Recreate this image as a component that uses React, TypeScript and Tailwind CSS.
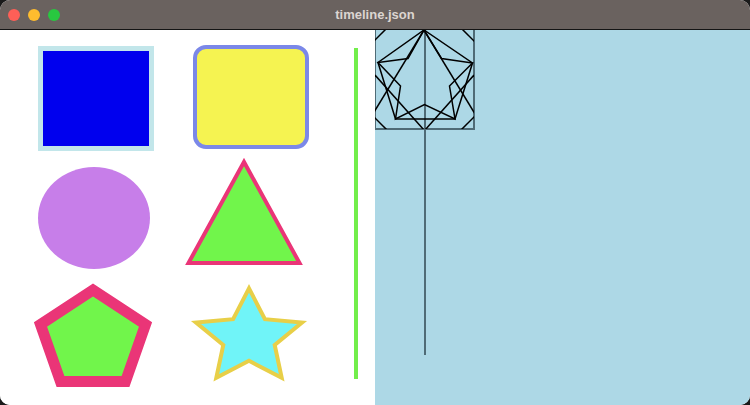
import React from "react";

const starPoints = (cx: number, cy: number, Rx: number, Ry: number, rx: number, ry: number) => {
  const pts: string[] = [];
  for (let i = 0; i < 10; i++) {
    const a = (-90 + i * 36) * (Math.PI / 180);
    const ax = i % 2 === 0 ? Rx : rx;
    const ay = i % 2 === 0 ? Ry : ry;
    pts.push(`${(cx + ax * Math.cos(a)).toFixed(1)},${(cy + ay * Math.sin(a)).toFixed(1)}`);
  }
  return pts.join(" ");
};

const TrafficLights = () => (
  <div className="flex items-center gap-[8px] pl-[8px]">
    <span className="w-[12px] h-[12px] rounded-full bg-[#fe5f57]" />
    <span className="w-[12px] h-[12px] rounded-full bg-[#febc2e]" />
    <span className="w-[12px] h-[12px] rounded-full bg-[#28c840]" />
  </div>
);

const ShapesPanel = () => (
  <div className="w-[375px] h-full bg-white flex">
    <div className="grid grid-cols-[155px_155px] grid-rows-[117px_118px_118px] pl-[17px] pt-[10px]">
      {/* row 1 */}
      <div className="flex items-start">
        <div className="ml-[21px] mt-[6px] w-[116px] h-[105px] border-[5px] border-[#c2e6ea] bg-[#0000ee]" />
      </div>
      <div className="flex items-start">
        <div className="ml-[21px] mt-[5px] w-[116px] h-[104px] border-[4px] border-[#7b88e8] rounded-[13px] bg-[#f5f351]" />
      </div>
      {/* row 2 */}
      <div className="flex items-start">
        <div className="ml-[21px] mt-[10px] w-[112px] h-[102px] rounded-[50%] bg-[#c77ee9]" />
      </div>
      <div>
        <svg width="155" height="118" viewBox="0 0 155 118">
          <polygon
            points="72,5 16.5,106 127.5,106"
            fill="#71f54b"
            stroke="#ea3577"
            strokeWidth="4"
          />
        </svg>
      </div>
      {/* row 3 */}
      <div>
        <svg width="155" height="118" viewBox="0 0 155 118">
          <polygon
            points="76,15 23.5,49.5 43.5,106.5 108.5,106.5 128.5,49.5"
            fill="#71f54b"
            stroke="#ea3577"
            strokeWidth="11"
          />
        </svg>
      </div>
      <div>
        <svg width="155" height="118" viewBox="0 0 155 118">
          <polygon
            points={starPoints(77, 62.8, 55.7, 49.5, 27, 23)}
            fill="#70f4f8"
            stroke="#e8cf48"
            strokeWidth="4"
          />
        </svg>
      </div>
    </div>
    <div className="ml-[27px] mt-[18px] w-[4px] h-[331px] bg-[#72ee4b]" />
  </div>
);

const pentagon = "49,0 3,32.5 20.5,89 80,89 97.5,33";
const star = "49,0 33,28.5 3,32.5 25.5,56 20.5,89 49.5,74.5 80,89 74.5,56 97.5,33 66.5,28.5";

const CanvasPanel = () => (
  <div className="relative flex-1 h-full bg-[#add8e6]">
    <svg className="absolute left-0 top-0" width="110" height="330" viewBox="0 0 110 330">
      <defs>
        <clipPath id="box">
          <rect x="0" y="0" width="99" height="99" />
        </clipPath>
      </defs>
      <rect x="0" y="-1" width="99" height="100" fill="none" stroke="#4f6b76" strokeWidth="2" />
      <line x1="50" y1="0" x2="50" y2="325" stroke="#4f6b76" strokeWidth="2" />
      <g clipPath="url(#box)" fill="none" stroke="#000" strokeWidth="1.5" strokeLinejoin="miter">
        <polygon points={pentagon} />
        <polygon points={star} />
        <line x1="49" y1="0" x2="-10" y2="97" />
        <line x1="49" y1="0" x2="108" y2="97" />
        <line x1="-2" y1="12" x2="12" y2="-2" />
        <line x1="86" y1="-2" x2="100" y2="12" />
        <line x1="-2" y1="86" x2="12" y2="100" />
        <line x1="86" y1="100" x2="100" y2="86" />
        <line x1="99" y1="45" x2="50" y2="100" />
        <line x1="0" y1="45" x2="49" y2="100" />
      </g>
    </svg>
  </div>
);

export default function App() {
  return (
    <div className="w-[750px] h-[405px] bg-[#1a1a1a]">
      <div className="w-full h-full rounded-[10px] overflow-hidden flex flex-col bg-white">
        <div className="relative h-[30px] shrink-0 bg-[#6a625f] border-b border-[#141414] flex items-center">
          <TrafficLights />
          <div
            className="absolute inset-0 flex items-center justify-center text-[13px] font-bold text-[#dcd5d1]"
            style={{ fontFamily: '"Liberation Sans", Arial, sans-serif' }}
          >
            timeline.json
          </div>
        </div>
        <div className="flex flex-1 min-h-0">
          <ShapesPanel />
          <CanvasPanel />
        </div>
      </div>
    </div>
  );
}
